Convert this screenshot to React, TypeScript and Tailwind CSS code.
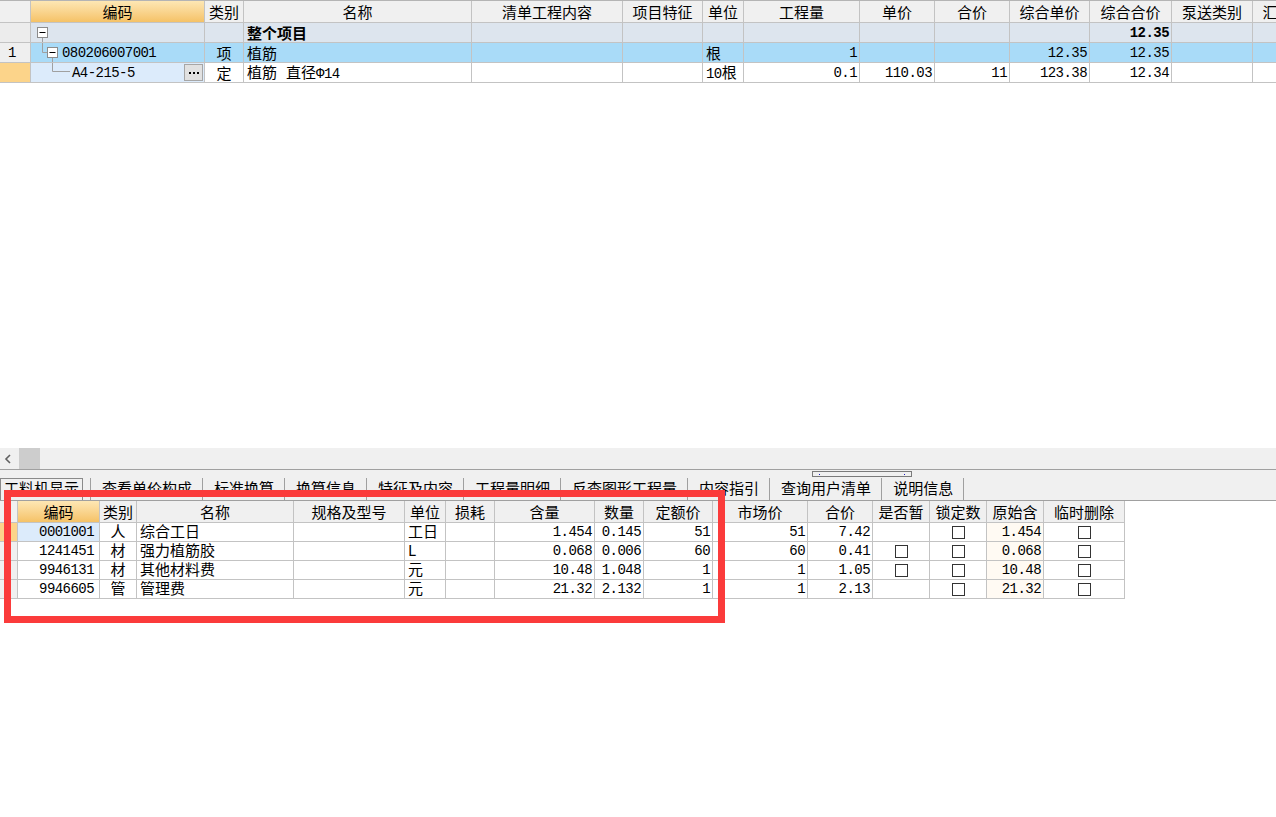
import React from "react";

// grid line colour used everywhere
const ln = "border-[#c3c3c3]";
const mono = "font-['Liberation_Mono',monospace] text-[14px] tracking-[-0.55px]";

const topW = [
    "w-[31px]", "w-[174px]", "w-[39px]", "w-[228px]", "w-[151px]", "w-[80px]", "w-[41px]",
    "w-[116px]", "w-[75px]", "w-[75px]", "w-[80px]", "w-[82px]", "w-[81px]", "w-[80px]",
];
const topHeads = [
    "", "编码", "类别", "名称", "清单工程内容", "项目特征", "单位", "工程量",
    "单价", "合价", "综合单价", "综合合价", "泵送类别", "汇总类别",
];

const botW = [
    "w-[18px]", "w-[82px]", "w-[37px]", "w-[157px]", "w-[111px]", "w-[41px]", "w-[49px]", "w-[100px]",
    "w-[49px]", "w-[69px]", "w-[95px]", "w-[65px]", "w-[57px]", "w-[57px]", "w-[57px]", "w-[81px]",
];
const botHeads = [
    "", "编码", "类别", "名称", "规格及型号", "单位", "损耗", "含量",
    "数量", "定额价", "市场价", "合价", "是否暂", "锁定数", "原始含", "临时删除",
];

type CellProps = {
    w: string;
    className?: string;
    children?: React.ReactNode;
};

const Cell: React.FC<CellProps> = ({ w, className = "", children }) => (
    <div className={`${w} shrink-0 h-full border-r ${ln} flex items-center whitespace-nowrap ${className}`}>
        {children}
    </div>
);

const Num = ({ children, bold }: { children: React.ReactNode; bold?: boolean }) => (
    <span className={`${mono} ${bold ? "font-bold" : ""}`}>{children}</span>
);

const Box = () => <div className="w-[13px] h-[13px] border border-[#333333] bg-white" />;

// header row shared by both grids
const HeadRow = ({ widths, heads }: { widths: string[]; heads: string[] }) => (
    <div className={`flex h-[22px] border-b ${ln}`}>
        {heads.map((h, i) => (
            <Cell
                key={i}
                w={widths[i]}
                className={`justify-center ${
                    h === "编码"
                        ? "bg-linear-to-b from-[#fde7b4] to-[#f5c266]"
                        : "bg-[#f0f0f0]"
                }`}
            >
                {h}
            </Cell>
        ))}
    </div>
);

const TreeA = () => (
    <svg className="absolute left-0 top-0" width="60" height="19">
        <rect x="6.5" y="4.5" width="10" height="10" fill="white" stroke="#8c8c8c" />
        <line x1="8.5" y1="9.5" x2="14.5" y2="9.5" stroke="#000" />
        <line x1="11.5" y1="15" x2="11.5" y2="19" stroke="#a0a0a0" />
    </svg>
);

const TreeB = () => (
    <svg className="absolute left-0 top-0" width="60" height="19">
        <line x1="11.5" y1="0" x2="11.5" y2="9.5" stroke="#a0a0a0" />
        <line x1="11.5" y1="9.5" x2="16.5" y2="9.5" stroke="#a0a0a0" />
        <rect x="16.5" y="4.5" width="10" height="10" fill="white" stroke="#8c8c8c" />
        <line x1="18.5" y1="9.5" x2="24.5" y2="9.5" stroke="#000" />
        <line x1="21.5" y1="15" x2="21.5" y2="19" stroke="#a0a0a0" />
    </svg>
);

const TreeC = () => (
    <svg className="absolute left-0 top-0" width="60" height="19">
        <line x1="21.5" y1="0" x2="21.5" y2="8.5" stroke="#a0a0a0" />
        <line x1="21.5" y1="8.5" x2="39" y2="8.5" stroke="#a0a0a0" />
    </svg>
);

const TopGrid = () => (
    <div className="w-[1276px] overflow-hidden border-t border-[#b4b4b4]">
        <div className="w-[1333px]">
            <HeadRow widths={topW} heads={topHeads} />

            {/* 整个项目 */}
            <div className={`flex h-[20px] border-b ${ln} bg-[#dde5ee]`}>
                <Cell w={topW[0]} className="bg-[#ececec]" />
                <Cell w={topW[1]} className="relative">
                    <TreeA />
                </Cell>
                <Cell w={topW[2]} />
                <Cell w={topW[3]} className="pl-[3px] font-bold">整个项目</Cell>
                <Cell w={topW[4]} />
                <Cell w={topW[5]} />
                <Cell w={topW[6]} />
                <Cell w={topW[7]} />
                <Cell w={topW[8]} />
                <Cell w={topW[9]} />
                <Cell w={topW[10]} />
                <Cell w={topW[11]} className="justify-end pr-[2px]">
                    <Num bold>12.35</Num>
                </Cell>
                <Cell w={topW[12]} />
                <Cell w={topW[13]} />
            </div>

            {/* 清单行 */}
            <div className={`flex h-[20px] border-b ${ln} bg-[#a9dbf8]`}>
                <Cell w={topW[0]} className="bg-[#efefef] pl-[8px]">
                    <Num>1</Num>
                </Cell>
                <Cell w={topW[1]} className="relative pl-[31px]">
                    <TreeB />
                    <Num>080206007001</Num>
                </Cell>
                <Cell w={topW[2]} className="justify-center">项</Cell>
                <Cell w={topW[3]} className="pl-[3px]">植筋</Cell>
                <Cell w={topW[4]} />
                <Cell w={topW[5]} />
                <Cell w={topW[6]} className="pl-[3px]">根</Cell>
                <Cell w={topW[7]} className="justify-end pr-[2px]">
                    <Num>1</Num>
                </Cell>
                <Cell w={topW[8]} />
                <Cell w={topW[9]} />
                <Cell w={topW[10]} className="justify-end pr-[2px]">
                    <Num>12.35</Num>
                </Cell>
                <Cell w={topW[11]} className="justify-end pr-[2px]">
                    <Num>12.35</Num>
                </Cell>
                <Cell w={topW[12]} />
                <Cell w={topW[13]} />
            </div>

            {/* 定额行 */}
            <div className={`flex h-[20px] border-b ${ln} bg-white`}>
                <Cell w={topW[0]} className="bg-[#fcd48a]" />
                <Cell w={topW[1]} className="relative pl-[41px] bg-[#dcebfb]">
                    <TreeC />
                    <Num>A4-215-5</Num>
                    <div className="ml-auto mr-[1px] w-[19px] h-[17px] bg-[#e1e1e1] border border-[#a6a6a6] flex items-center justify-center gap-[2px]">
                        <div className="w-[2px] h-[2px] bg-black" />
                        <div className="w-[2px] h-[2px] bg-black" />
                        <div className="w-[2px] h-[2px] bg-black" />
                    </div>
                </Cell>
                <Cell w={topW[2]} className="justify-center">定</Cell>
                <Cell w={topW[3]} className="pl-[3px]">
                    <span className="leading-none">
                        植筋<span className="ml-[9px]">直径</span>
                        <span className={mono}>Φ14</span>
                    </span>
                </Cell>
                <Cell w={topW[4]} />
                <Cell w={topW[5]} />
                <Cell w={topW[6]} className="pl-[3px]">
                    <span className="leading-none">
                        <Num>10</Num>根
                    </span>
                </Cell>
                <Cell w={topW[7]} className="justify-end pr-[2px]">
                    <Num>0.1</Num>
                </Cell>
                <Cell w={topW[8]} className="justify-end pr-[2px]">
                    <Num>110.03</Num>
                </Cell>
                <Cell w={topW[9]} className="justify-end pr-[2px]">
                    <Num>11</Num>
                </Cell>
                <Cell w={topW[10]} className="justify-end pr-[2px]">
                    <Num>123.38</Num>
                </Cell>
                <Cell w={topW[11]} className="justify-end pr-[2px]">
                    <Num>12.34</Num>
                </Cell>
                <Cell w={topW[12]} />
                <Cell w={topW[13]} />
            </div>
        </div>
    </div>
);

const ScrollBar = () => (
    <div className="h-[21px] bg-[#f0f0f0] flex items-center">
        <div className="w-[19px] pl-[4px] flex items-center">
            <svg width="8" height="10" viewBox="0 0 8 10">
                <path d="M6 1 L2 5 L6 9" stroke="#606060" strokeWidth="1.6" fill="none" />
            </svg>
        </div>
        <div className="w-[21px] h-full bg-[#cdcdcd]" />
    </div>
);

const tabs = [
    "查看单价构成", "标准换算", "换算信息", "特征及内容", "工程量明细",
    "反查图形工程量", "内容指引", "查询用户清单", "说明信息",
];

const Sep = () => <div className="w-px bg-[#a0a0a0]" />;

const TabBar = () => (
    <div className="relative h-[32px] bg-[#f0f0f0] border-t border-b border-[#a0a0a0] flex items-end">
        {/* splitter handle */}
        <div className="absolute left-[812px] top-[1px] w-[100px] h-[6px] border border-[#7a7a7a] bg-[#f0f0f0] flex items-center justify-between px-[6px]">
            <div className="w-px h-px bg-[#2020c0]" />
            <div className="w-px h-px bg-[#2020c0]" />
        </div>
        <div className="flex h-[22px] items-stretch">
            <div className="w-[83px] border-t border-l border-r border-[#8a8a8a] bg-[#f0f0f0] flex items-center justify-center pb-[3px]">
                工料机显示
            </div>
            <div className="w-[7px]" />
            {tabs.map((t) => (
                <React.Fragment key={t}>
                    <Sep />
                    <div className="pl-[11px] pr-[10px] flex items-center pb-[3px]">{t}</div>
                </React.Fragment>
            ))}
            <Sep />
        </div>
    </div>
);

type BotRow = {
    code: string;
    kind: string;
    name: string;
    unit: string;
    qty: string;
    num: string;
    quota: string;
    market: string;
    total: string;
    temp: boolean;
    orig: string;
};

const botRows: BotRow[] = [
    { code: "0001001", kind: "人", name: "综合工日", unit: "工日", qty: "1.454", num: "0.145", quota: "51", market: "51", total: "7.42", temp: false, orig: "1.454" },
    { code: "1241451", kind: "材", name: "强力植筋胶", unit: "L", qty: "0.068", num: "0.006", quota: "60", market: "60", total: "0.41", temp: true, orig: "0.068" },
    { code: "9946131", kind: "材", name: "其他材料费", unit: "元", qty: "10.48", num: "1.048", quota: "1", market: "1", total: "1.05", temp: true, orig: "10.48" },
    { code: "9946605", kind: "管", name: "管理费", unit: "元", qty: "21.32", num: "2.132", quota: "1", market: "1", total: "2.13", temp: false, orig: "21.32" },
];

const BottomGrid = () => (
    <div className="w-[1125px]">
        <HeadRow widths={botW} heads={botHeads} />
        {botRows.map((r, i) => (
            <div key={r.code} className={`flex h-[19px] border-b ${ln} bg-white`}>
                <Cell w={botW[0]} className={i === 0 ? "bg-[#fcd48a]" : "bg-[#f0f0f0]"} />
                <Cell w={botW[1]} className={`justify-end pr-[5px] ${i === 0 ? "bg-[#dcebfb]" : ""}`}>
                    <Num>{r.code}</Num>
                </Cell>
                <Cell w={botW[2]} className="justify-center pb-[2px]">{r.kind}</Cell>
                <Cell w={botW[3]} className="pl-[3px] pb-[2px]">{r.name}</Cell>
                <Cell w={botW[4]} />
                <Cell w={botW[5]} className="pl-[3px] pb-[2px]">{r.unit}</Cell>
                <Cell w={botW[6]} />
                <Cell w={botW[7]} className="justify-end pr-[2px]">
                    <Num>{r.qty}</Num>
                </Cell>
                <Cell w={botW[8]} className="justify-end pr-[2px]">
                    <Num>{r.num}</Num>
                </Cell>
                <Cell w={botW[9]} className="justify-end pr-[2px]">
                    <Num>{r.quota}</Num>
                </Cell>
                <Cell w={botW[10]} className="justify-end pr-[2px]">
                    <Num>{r.market}</Num>
                </Cell>
                <Cell w={botW[11]} className="justify-end pr-[2px]">
                    <Num>{r.total}</Num>
                </Cell>
                <Cell w={botW[12]} className="justify-center">
                    {r.temp && <Box />}
                </Cell>
                <Cell w={botW[13]} className="justify-center">
                    <Box />
                </Cell>
                <Cell w={botW[14]} className="justify-end pr-[2px] bg-[#fffaf3]">
                    <Num>{r.orig}</Num>
                </Cell>
                <Cell w={botW[15]} className="justify-center">
                    <Box />
                </Cell>
            </div>
        ))}
    </div>
);

export default function App() {
    return (
        <div className="relative w-[1276px] h-[817px] overflow-hidden bg-white text-black font-['Noto_Sans_CJK_SC',sans-serif] text-[15px] leading-[18px]">
            <TopGrid />
            <div className="h-[365px]" />
            <ScrollBar />
            <TabBar />
            <BottomGrid />
            {/* red annotation frame */}
            <div className="pointer-events-none absolute left-[4px] top-[490px] w-[721px] h-[133px] border-[7px] border-[#fb3b3b]" />
        </div>
    );
}
